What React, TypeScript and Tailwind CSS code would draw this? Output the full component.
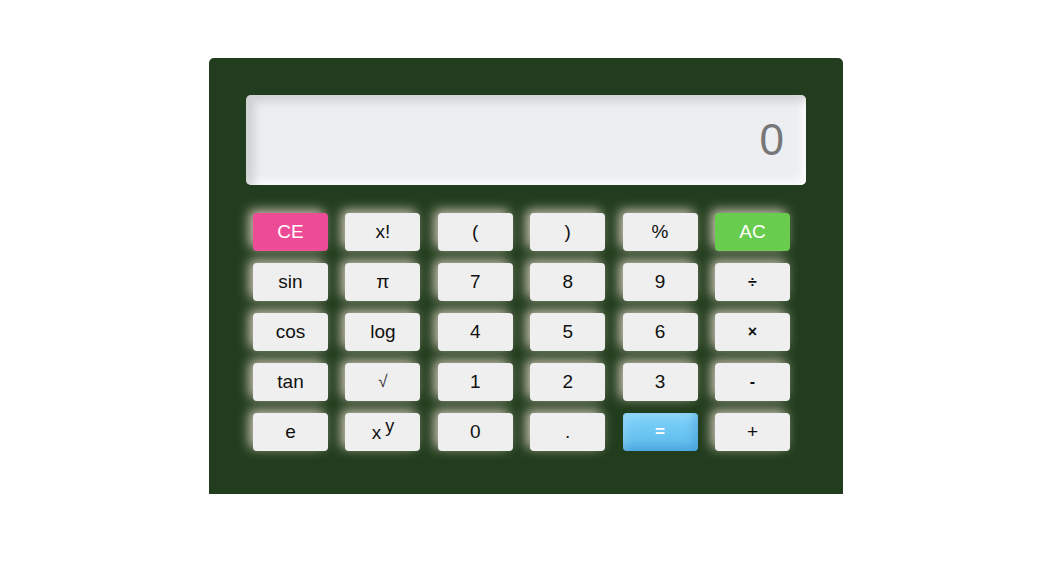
const rows: { label: React.ReactNode; kind?: "ce" | "ac" | "eq" | "op" | "root" }[][] = [
  [{ label: "CE", kind: "ce" }, { label: "x!" }, { label: "(" }, { label: ")" }, { label: "%" }, { label: "AC", kind: "ac" }],
  [{ label: "sin" }, { label: "π" }, { label: "7" }, { label: "8" }, { label: "9" }, { label: "÷", kind: "op" }],
  [{ label: "cos" }, { label: "log" }, { label: "4" }, { label: "5" }, { label: "6" }, { label: "×", kind: "op" }],
  [{ label: "tan" }, { label: "√", kind: "root" }, { label: "1" }, { label: "2" }, { label: "3" }, { label: "-", kind: "op" }],
  [
    { label: "e" },
    {
      label: (
        <span className="flex items-baseline">
          <span className="relative top-[1px]">x</span>
          <span className="relative -top-[6px] ml-[4px] text-[18px]">y</span>
        </span>
      ),
    },
    { label: "0" },
    { label: "." },
    { label: "=", kind: "eq" },
    { label: "+" },
  ],
];

const glow = "shadow-[-4px_-3px_12px_rgba(250,232,222,0.78)]";

function Key({ label, kind }: { label: React.ReactNode; kind?: string }) {
  let cls = `bg-[#efefef] text-[#111] text-[19px] ${glow}`;
  if (kind === "ce") cls = `bg-[#ee4b97] text-white text-[19px] ${glow}`;
  if (kind === "ac") cls = `bg-[#68cc4f] text-white text-[19px] ${glow}`;
  if (kind === "op") cls = `bg-[#efefef] text-[#111] text-[16px] font-semibold ${glow}`;
  if (kind === "root") cls = `bg-[#efefef] text-[#333] text-[17px] ${glow}`;
  if (kind === "eq")
    cls =
      "bg-gradient-to-b from-[#7fd3fb] to-[#5ab9ea] text-white text-[17px] font-bold shadow-[inset_-4px_-4px_8px_rgba(40,120,190,0.35),inset_4px_4px_8px_rgba(255,255,255,0.2)]";
  return (
    <button className={`flex h-[38px] w-[75px] items-center justify-center rounded-[4px] ${cls}`}>
      {label}
    </button>
  );
}

export default function App() {
  return (
    <div className="min-h-[583px] w-full bg-white pt-[58px] font-['Liberation_Sans',Arial,sans-serif]">
      <div className="ml-[209px] h-[436px] w-[634px] rounded-t-[5px] bg-[#223d1d] px-[37px] pt-[37px]">
        <div className="flex h-[90px] w-[560px] items-center justify-end rounded-[5px] bg-[#eceef1] pr-[22px] shadow-[inset_8px_6px_10px_rgba(0,0,0,0.13),inset_-4px_-4px_8px_rgba(255,255,255,0.9)]">
          <span className="text-[44px] leading-none text-[#777]">0</span>
        </div>
        <div className="mt-[28px] grid grid-cols-[repeat(6,75px)] gap-x-[17.4px] gap-y-[12px] pl-[7px]">
          {rows.flat().map((k, i) => (
            <Key key={i} label={k.label} kind={k.kind} />
          ))}
        </div>
      </div>
    </div>
  );
}
